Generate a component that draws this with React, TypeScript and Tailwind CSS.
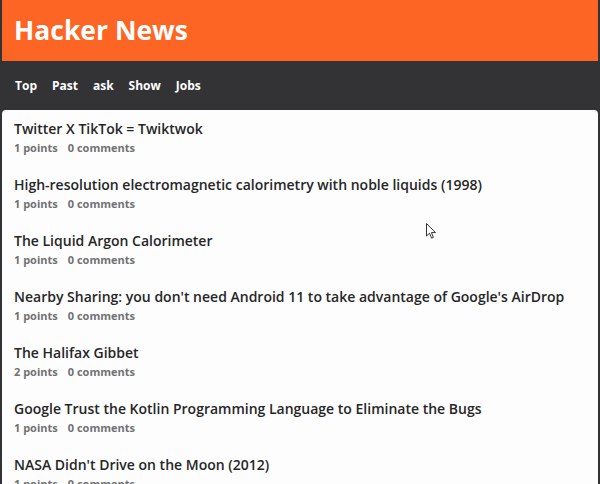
import React from "react";

const stories = [
  { title: "Twitter X TikTok = Twiktwok", points: 1, comments: 0 },
  { title: "High-resolution electromagnetic calorimetry with noble liquids (1998)", points: 1, comments: 0 },
  { title: "The Liquid Argon Calorimeter", points: 1, comments: 0 },
  { title: "Nearby Sharing: you don't need Android 11 to take advantage of Google's AirDrop", points: 1, comments: 0 },
  { title: "The Halifax Gibbet", points: 2, comments: 0 },
  { title: "Google Trust the Kotlin Programming Language to Eliminate the Bugs", points: 1, comments: 0 },
  { title: "NASA Didn't Drive on the Moon (2012)", points: 1, comments: 0 },
];

const navItems = ["Top", "Past", "ask", "Show", "Jobs"];

export default function App() {
  return (
    <div
      className="relative h-[484px] w-[600px] overflow-hidden bg-[#333336] px-[2px]"
      style={{ fontFamily: '"Open Sans", "Noto Sans", sans-serif' }}
    >
      <header className="flex h-[61px] items-center bg-[#fd6524] pl-[12px]">
        <h1 className="text-[26.5px] font-bold leading-none text-white">Hacker News</h1>
      </header>

      <nav className="flex h-[49px] items-center gap-[15px] pl-[13px]">
        {navItems.map((item) => (
          <a key={item} href="#" className="text-[12px] font-bold leading-none text-white">
            {item}
          </a>
        ))}
      </nav>

      <main className="h-full rounded-t-[4px] bg-[#fdfdfe] px-[12px]">
        {stories.map((story, i) => (
          <div key={i} className="pb-[10px] pt-[9px]">
            <h2 className="whitespace-nowrap text-[14px] font-semibold leading-[20px] text-[#262626]">
              {story.title}
            </h2>
            <div className="mt-[1px] flex gap-[10px] text-[11px] font-bold leading-[16px] text-[#717171]">
              <span>{story.points} points</span>
              <span>{story.comments} comments</span>
            </div>
          </div>
        ))}
      </main>

      {/* mouse pointer captured in the screenshot */}
      <svg
        className="absolute left-[426px] top-[223px]"
        width="11"
        height="17"
        viewBox="0 0 11 17"
      >
        <path
          d="M0.5 0.5 L0.5 13 L3.5 10.2 L5.6 15.2 L7.4 14.4 L5.4 9.6 L9.5 9.6 Z"
          fill="#fff"
          stroke="#333"
          strokeWidth="1"
          strokeLinejoin="round"
        />
      </svg>
    </div>
  );
}
